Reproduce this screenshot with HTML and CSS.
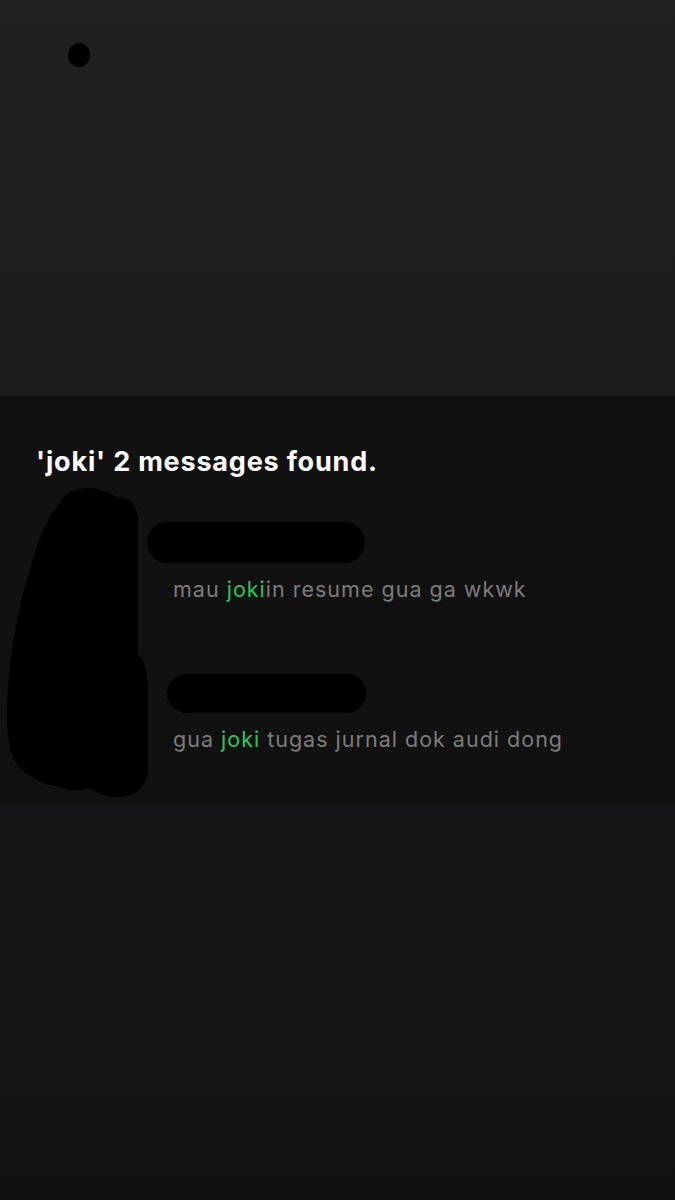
FILE: index.html
```html
<!DOCTYPE html>
<html lang="id">
<head>
<meta charset="utf-8">
<title>Search results</title>
<link rel="stylesheet" href="styles.css">
</head>
<body>
  <div class="page">
    <header class="top-area">
      <svg class="dot" width="24" height="26" viewBox="0 0 24 26"><ellipse cx="12" cy="13" rx="11" ry="12" fill="#000"/></svg>
    </header>
    <section class="results">
      <h1 class="results-title">'joki' 2 messages found.</h1>
      <div class="result-list">
        <div class="result">
          <div class="avatar"></div>
          <div class="result-body">
            <div class="name name-1"><span class="redact"></span></div>
            <p class="message">mau <span class="hl">joki</span>in resume gua ga wkwk</p>
          </div>
        </div>
        <div class="result">
          <div class="avatar"></div>
          <div class="result-body">
            <div class="name name-2"><span class="redact"></span></div>
            <p class="message">gua <span class="hl">joki</span> tugas jurnal dok audi dong</p>
          </div>
        </div>
      </div>
      <svg class="blob" width="675" height="407" viewBox="0 396 675 407">
        <path fill="#000" d="M60 503 C65 488 90 486 100 490 C108 492 112 494 117 497 C130 497 137 505 138 520 L138 655 C142 658 147 665 148 690 L148 770 C147 790 130 798 117 797 C105 797 95 792 90 788 C80 792 65 790 58 786 C50 786 40 783 35 778 C12 770 7 745 7 715 C7 660 20 600 30 570 C38 540 48 515 60 503 Z"/>
      </svg>
    </section>
    <footer class="bottom-area"></footer>
  </div>
</body>
</html>
```

FILE: styles.css
```css
* { box-sizing: border-box; }
html, body { margin: 0; padding: 0; }
body {
  background: #111111;
  font-family: Inter, "Noto Sans", "Liberation Sans", sans-serif;
}
.page {
  width: 675px;
  height: 1200px;
  display: flex;
  flex-direction: column;
}
.top-area {
  position: relative;
  height: 396px;
  flex: none;
  background: linear-gradient(#212121, #1c1c1d);
}
.dot {
  position: absolute;
  left: 67px;
  top: 42px;
}
.results {
  position: relative;
  flex: none;
  height: 407px;
  background: #111111;
  padding: 50px 0 0 36px;
}
.results-title {
  margin: 0;
  font-size: 27px;
  line-height: 32px;
  font-weight: 700;
  color: #ffffff;
  letter-spacing: 0.8px;
}
.result-list {
  margin-top: 44px;
  display: flex;
  flex-direction: column;
  gap: 71px;
}
.result {
  display: flex;
  align-items: flex-start;
  gap: 77px;
}
.avatar {
  width: 60px;
  height: 60px;
  margin-top: 10px;
  border-radius: 50%;
  background: #000;
  flex: none;
}
.result-body {
  display: flex;
  flex-direction: column;
  gap: 12px;
}
.name { display: flex; }
.name-1 { height: 41px; }
.name-2 { height: 39px; }
.redact {
  display: block;
  background: #000;
  border-radius: 21px;
}
.name-1 .redact { width: 218px; height: 41px; margin-left: -26px; }
.name-2 .redact { width: 199px; height: 39px; margin-left: -6px; }
.message {
  margin: 0;
  font-size: 21.5px;
  line-height: 28px;
  letter-spacing: 1px;
  color: #7c7c7c;
  white-space: nowrap;
}
.hl { color: #30c45a; }
.blob {
  position: absolute;
  left: 0;
  top: 0;
}
.bottom-area {
  flex: 1;
  background: linear-gradient(#151517, #141415 70%, #111111);
}
```
